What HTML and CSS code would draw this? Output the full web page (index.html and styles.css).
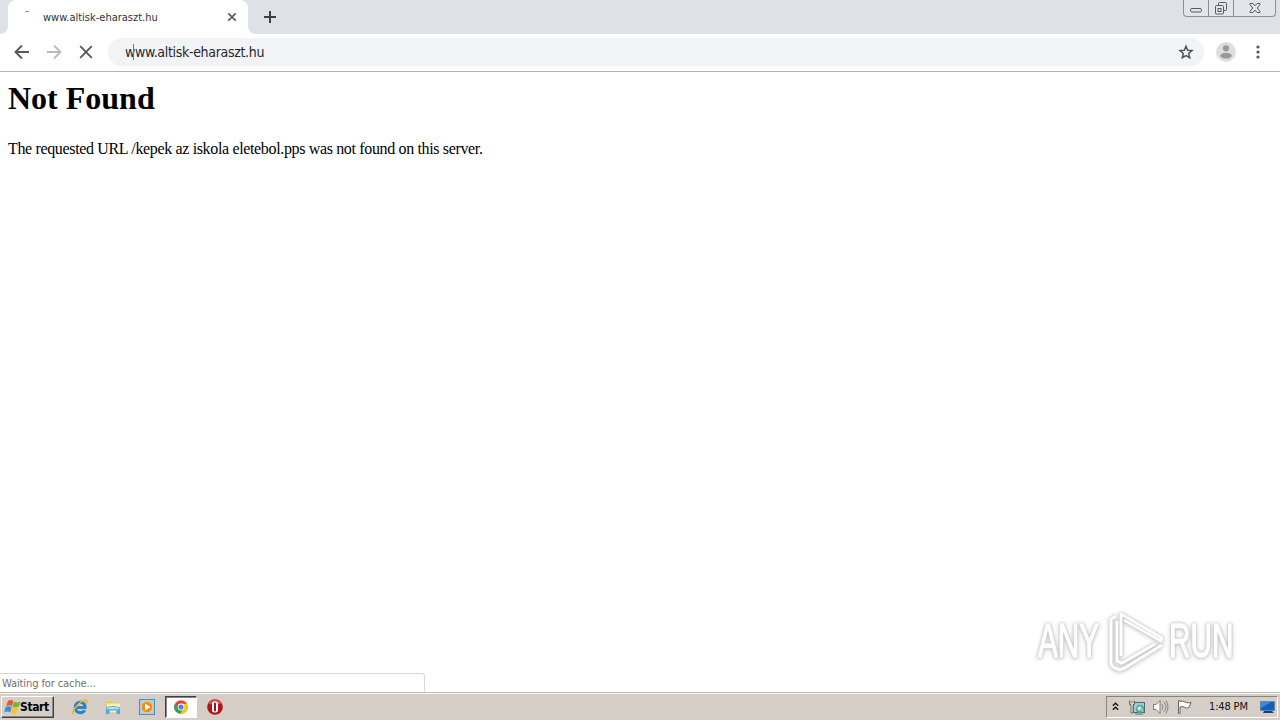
FILE: index.html
```html
<!DOCTYPE html>
<html>
<head>
    <meta charset="UTF-8">
    <title>www.altisk-eharaszt.hu</title>
    <link rel="stylesheet" href="styles.css">
</head>
<body>
    <!-- Tabs and window buttons -->
    <div class="tabstrip">
        <div class="tab-edge"></div>
        <div class="tab">
            <span class="spinner"></span>
            <span class="tab-title">www.altisk-eharaszt.hu</span>
            <svg class="tab-close" width="10" height="10" viewBox="0 0 10 10"><path d="M1.3 1.3l7.4 7.4M8.7 1.3L1.3 8.7"/></svg>
        </div>
        <div class="tab-next">
            <svg class="new-tab" width="12" height="12" viewBox="0 0 12 12"><path d="M6 0v12M0 6h12"/></svg>
        </div>
        <div class="window-buttons">
            <span class="min"><svg width="14" height="16" viewBox="0 0 14 16"><rect x="1.5" y="8.5" width="11" height="3.5" rx="1.5"/></svg></span>
            <span class="restore"><svg width="14" height="16" viewBox="0 0 14 16"><path d="M4.500 5V3.500q0-1 1-1h6q1 0 1 1v6q0 1-1 1H10"/><rect x="1.500" y="5.500" width="8" height="8.500" rx="1"/><rect x="4" y="8.500" width="3" height="3"/></svg></span>
            <span class="close"><svg width="14" height="16" viewBox="0 0 14 16"><path d="M2 3.500h3L7 5.800l2-2.300h3v1L9.300 8l2.700 3.500v1H9L7 10.200l-2 2.300H2v-1L4.700 8 2 4.500z"/></svg></span>
        </div>
    </div>
    <!-- Toolbar -->
    <div class="toolbar">
        <svg class="nav-icon" width="16" height="16" viewBox="0 0 16 16"><path d="M15 8H2M8 1.500L1.500 8 8 14.500"/></svg>
        <svg class="nav-icon disabled" width="16" height="16" viewBox="0 0 16 16"><path d="M1 8h13M8 1.500L14.500 8 8 14.500"/></svg>
        <svg class="nav-icon" width="16" height="16" viewBox="0 0 16 16"><path d="M2.200 2.200l11.600 11.600M13.800 2.200L2.200 13.800"/></svg>
        <div class="omnibox">
            <span class="url">w<i class="caret"></i>ww.altisk-eharaszt.hu</span>
            <svg class="star" width="16" height="16" viewBox="0 0 16 16"><path d="M8 2.200l1.700 4 4.300.4-3.300 2.900 1 4.200L8 11.500l-3.700 2.200 1-4.200L2 6.600l4.300-.4z"/></svg>
        </div>
        <svg class="avatar" width="20" height="20" viewBox="0 0 20 20"><circle cx="10" cy="10" r="10" fill="#dedede"/><circle cx="10" cy="6.300" r="3.100" fill="#9a9a9a"/><ellipse cx="10" cy="13.700" rx="5.800" ry="2.900" fill="#9a9a9a"/></svg>
        <svg class="menu" width="4" height="14" viewBox="0 0 4 14"><circle cx="2" cy="2" r="1.600"/><circle cx="2" cy="7" r="1.600"/><circle cx="2" cy="12" r="1.600"/></svg>
    </div>
    <!-- Page content -->
    <div class="page">
        <h1>Not Found</h1>
        <p>The requested URL /kepek az iskola eletebol.pps was not found on this server.</p>
        <div class="watermark">
            <span class="any">ANY</span>
            <svg width="60" height="64" viewBox="0 0 60 64"><path d="M13 7l-5 3v45q1 3 4 4l5 2 4-2"/><path d="M14 12v40l5 2 33-19"/><path d="M18 47V5l41 24-1 3-37-21M59 36L20 60"/></svg>
            <span class="run">RUN</span>
        </div>
        <div class="status">Waiting for cache...</div>
    </div>
    <!-- Windows taskbar -->
    <div class="taskbar">
        <div class="start">
            <svg width="17" height="16" viewBox="0 0 17 16"><path fill="#e8562a" d="M4 2q2.500-2 5.500 0L8 7.300Q5 5.500 2 7.200z"/><path fill="#72b532" d="M10.200 2.800q3 1.600 6.300-.2l-1.700 5q-3 1.600-6.200.1z"/><path fill="#3b8ede" d="M1.700 8q3-1.600 6 .1L6.200 13.400q-3-1.700-6 0z"/><path fill="#f9c22f" d="M8.300 8.500q3 1.600 6.200 0L13 13.800q-3 1.600-6.200.1z"/></svg>
            <span>Start</span>
        </div>
        <div class="launch">
            <span class="task"><svg width="18" height="18" viewBox="0 0 18 18"><path fill="none" stroke="#2484d4" stroke-width="3" d="M6 9.500h9q0-5-4.700-5.200Q5.600 4.500 5.300 9.500q.2 5 5 5.200 3 0 4.400-2.400"/><path fill="none" stroke="#edb41c" stroke-width="1.500" d="M4 16q-3-1 1.500-6.500Q11 2.500 15.500 2q2 .2 1 3.500"/></svg></span>
            <span class="task"><svg width="18" height="18" viewBox="0 0 18 18"><path fill="#e9c95e" d="M2 3h5l1 1.500h7V14H2z"/><path fill="#fbefaa" d="M3 5.500h13V14H3z"/><path fill="#53a8dc" d="M2 9.500q7-3 14 0V16h-3.500v-3.500h-7V16H2z"/><path fill="#b9e2f5" d="M3 10q6-2 12 0v1.200H3z"/></svg></span>
            <span class="task"><svg width="18" height="18" viewBox="0 0 18 18"><rect x="1.500" y="1.500" width="15" height="15" fill="#a7cff0" stroke="#4b8fc8"/><circle cx="9" cy="9" r="5.700" fill="#f28a16" stroke="#fbc874"/><path fill="#fff" d="M7 5.500v7L12.500 9z"/></svg></span>
            <span class="task active"><svg width="16" height="16" viewBox="0 0 16 16"><circle cx="8" cy="8" r="6.800" fill="#e14334"/><path fill="#2fa452" d="M2.100 4.600L5.200 9.900 8 11.300 7.200 14.800A6.800 6.800 0 0 1 2.100 4.600z"/><path fill="#fbc918" d="M8 4.800h6A6.800 6.800 0 0 1 7.200 14.800L10.800 9.600z"/><circle cx="8" cy="8" r="3.400" fill="#fff"/><circle cx="8" cy="8" r="2.600" fill="#4285e8"/></svg></span>
            <span class="task"><svg width="18" height="18" viewBox="0 0 18 18"><circle cx="9" cy="9" r="7.800" fill="#b3141b"/><path fill="#dc5753" d="M2.500 5.500q6.500-7.500 13 0-6.500 2-13 0z"/><rect x="6" y="3.500" width="6" height="11" rx="2.500" fill="#fff"/><rect x="8" y="4.500" width="2" height="9" rx="1" fill="#8c1a1c"/></svg></span>
        </div>
        <div class="tray">
            <svg class="chevrons" width="7" height="9" viewBox="0 0 7 9"><path d="M.8 3.700l2.700-2.500 2.700 2.500M.8 7.700l2.700-2.500 2.700 2.500"/></svg>
            <svg class="network" width="17" height="16" viewBox="0 0 17 16"><rect x="4.500" y="3.500" width="11" height="10" fill="#a4cdd4" stroke="#52666a"/><circle cx="11" cy="10" r="4.300" fill="#4ba6ad"/><path fill="#c9f1ce" d="M8 9l3-2 2 2-3 3zM12 11l2-1-1 3z"/><path fill="#f7f7f1" stroke="#6b6d69" d="M.5 1.500v4h1.500V14h2V5.500h1.500v-4M2 1.500v3M4 1.500v3"/><path stroke="#666" d="M6 15h8"/></svg>
            <svg class="sound" width="17" height="16" viewBox="0 0 17 16"><path fill="#fff" stroke="#777" d="M.5 5.500H3l4-4v13l-4-4H.5z"/><path fill="none" stroke="#888" d="M9 5q2 3 0 6M11 3q4 5 0 10M13 1.500q4 6.500 0 13"/></svg>
            <svg class="flag" width="17" height="16" viewBox="0 0 17 16"><path fill="#fff" stroke="#666" d="M1.500 14.500V1.500H3v1q3-1 5 .5 2 1.500 6 .5l-2 5q-3 1.500-5-.5-2-1-4 0v6.500z"/></svg>
            <span class="clock">1:48 PM</span>
            <svg class="desktop" width="17" height="16" viewBox="0 0 17 16"><path fill="#155fb8" stroke="#6285ac" d="M1.500 2.500h14v9h-14z"/><path fill="#3a8be0" d="M2 3h10L2 9z"/><path fill="#163e77" d="M5 12h8l2 2H4z"/></svg>
        </div>
    </div>
</body>
</html>
```
FILE: styles.css
```css
* {
    box-sizing: border-box;
}
body {
    margin: 0;
    width: 1280px;
    height: 720px;
    overflow: hidden;
    display: flex;
    flex-direction: column;
    background-color: #fff;
    font-family: "DejaVu Sans Condensed", "DejaVu Sans", sans-serif;
    font-stretch: condensed;
    color: #333;
}
svg {
    display: block;
    flex: none;
    fill: none;
}
/* Tabs */
.tabstrip {
    display: flex;
    height: 34px;
    background-color: #fff;
}
.tab-edge {
    width: 8px;
    background-color: #dee1e6;
    border-bottom-right-radius: 8px;
}
.tab {
    display: flex;
    align-items: center;
    width: 240px;
    padding: 0 11px 0 17px;
    background-color: #dee1e6;
    position: relative;
    z-index: 0;
}
.tab::before {
    content: "";
    position: absolute;
    inset: 0;
    z-index: -1;
    background-color: #fff;
    border-radius: 8px 8px 0 0;
}
.spinner {
    width: 4px;
    height: 2px;
    margin-bottom: 11px;
    border-top: 1px solid #888;
    border-radius: 2px;
}
.tab-title {
    flex: 1;
    margin-left: 14px;
    font-size: 11px;
    letter-spacing: 0;
    white-space: nowrap;
}
.tab-close {
    stroke: #5a5d61;
    stroke-width: 1.7;
}
.tab-next {
    flex: 1;
    display: flex;
    align-items: center;
    padding-left: 16px;
    background-color: #dee1e6;
    border-bottom-left-radius: 8px;
}
.new-tab {
    stroke: #3c4043;
    stroke-width: 2;
}
.window-buttons {
    display: flex;
    width: 97px;
    padding-right: 4px;
    background-color: #dee1e6;
}
.window-buttons span {
    display: flex;
    justify-content: center;
    height: 17px;
    border: 1px solid #8b8f97;
    border-top: 0;
    border-left: 0;
    background-color: #e3e5ea;
}
.window-buttons svg {
    stroke: #565a62;
}
.window-buttons .min {
    width: 26px;
    border-left: 1px solid #8b8f97;
    border-bottom-left-radius: 4px;
}
.window-buttons .restore {
    width: 25px;
}
.window-buttons .close {
    width: 42px;
    border-bottom-right-radius: 4px;
}
/* Toolbar */
.toolbar {
    display: flex;
    align-items: center;
    height: 38px;
    padding: 0 20px 2px 14px;
    border-bottom: 1px solid #b3b5b5;
}
.nav-icon {
    margin-right: 16px;
    stroke: #56595d;
    stroke-width: 1.9;
}
.nav-icon.disabled {
    stroke: #b9bbbd;
}
.omnibox {
    display: flex;
    align-items: center;
    width: 1096px;
    height: 28px;
    margin-left: -2px;
    padding: 0 10px 0 17px;
    border-radius: 14px;
    background-color: #f1f3f4;
}
.url {
    position: relative;
    flex: 1;
    font-size: 14px;
    letter-spacing: -0.32px;
    color: #25282c;
}
.caret {
    position: absolute;
    left: 8px;
    top: 0;
    width: 1px;
    height: 16px;
    background-color: #777;
}
.star {
    stroke: #505357;
    stroke-width: 1.5;
}
.avatar {
    margin-left: 12px;
}
.menu {
    margin-left: auto;
    fill: #53565a;
}
/* Page */
.page {
    position: relative;
    flex: 1;
    padding: 8px;
    font-family: "Liberation Serif", serif;
    color: #000;
}
h1 {
    margin: 0;
    font-size: 32px;
    line-height: 37px;
    letter-spacing: 0;
}
p {
    margin: 23px 0 0;
    font-size: 16px;
    line-height: 18px;
    letter-spacing: -0.35px;
}
.status {
    position: absolute;
    left: 0;
    bottom: 0;
    width: 425px;
    height: 19px;
    padding-left: 2px;
    border: 1px solid #d8d8d8;
    border-left: 0;
    border-bottom: 0;
    border-top-right-radius: 3px;
    font-family: "DejaVu Sans Condensed", "DejaVu Sans", sans-serif;
    font-size: 11px;
    line-height: 19px;
    letter-spacing: -0.1px;
    color: #707070;
}
/* Watermark sits over the page */
.watermark {
    position: absolute;
    left: 1038px;
    top: 537px;
    display: flex;
    align-items: center;
    color: #fff;
    font-family: "Liberation Sans", sans-serif;
    font-size: 48px;
    line-height: 64px;
    -webkit-text-stroke: 1.5px #fff;
    filter: drop-shadow(0 0 1px #bbb) drop-shadow(0 1px 2px #ccc);
}
.watermark span {
    width: 65px;
    transform: scaleX(0.62);
    transform-origin: left;
}
.watermark svg {
    margin: 0 6px 0 0;
    stroke: #fff;
    stroke-width: 3;
    stroke-linejoin: round;
}
/* Taskbar */
.taskbar {
    display: flex;
    align-items: center;
    height: 28px;
    padding: 0 2px 0 1px;
    background-color: #d5cec6;
    border-top: 1px solid #b9b8b3;
    box-shadow: inset 0 1px 0 #fff;
}
.start {
    display: flex;
    align-items: center;
    width: 53px;
    height: 22px;
    padding-left: 2px;
    border: 1px solid;
    border-color: #fff #404040 #404040 #fff;
    box-shadow: inset -1px -1px 0 #88847f;
    font-size: 12px;
    font-weight: bold;
    letter-spacing: -0.4px;
    color: #000;
}
.start span {
    margin-left: -1px;
}
.launch {
    display: flex;
    margin-left: 9px;
    gap: 2px;
}
.task {
    display: flex;
    align-items: center;
    justify-content: center;
    width: 32px;
    height: 22px;
}
.task.active {
    border: 1px solid;
    border-color: #404040 #fff #fff #404040;
    box-shadow: inset 1px 1px 0 #88847f;
    background-color: #fff;
}
.tray {
    display: flex;
    align-items: center;
    width: 172px;
    height: 22px;
    margin-left: auto;
    padding-left: 5px;
    border: 1px solid;
    border-color: #88847f #fff #fff #88847f;
}
.chevrons {
    margin-right: 10px;
    stroke: #111;
    stroke-width: 1.3;
}
.network, .sound {
    margin-right: 7px;
}
.clock {
    width: 50px;
    margin-left: 15px;
    font-size: 11px;
    letter-spacing: -0.15px;
    white-space: nowrap;
    color: #111;
}
```
